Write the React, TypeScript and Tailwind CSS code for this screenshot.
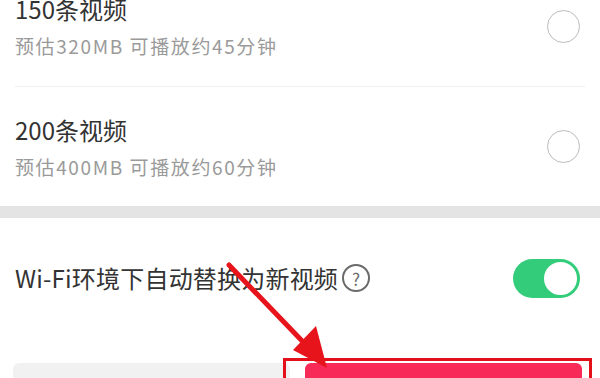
import React from "react";

function OptionRow({ title, sub, h }: { title: string; sub: string; h: string }) {
  return (
    <div className={`flex items-center justify-between pl-[15px] pr-[20px] ${h}`}>
      <div className="flex flex-col">
        <div className="text-[24px] leading-[32px] text-[#333333]">{title}</div>
        <div className="mt-[8px] text-[19px] leading-[26px] tracking-[1.6px] text-[#9a9a9a]">{sub}</div>
      </div>
      <div className="h-[33px] w-[33px] rounded-full border-[1.5px] border-[#bcbcbc]" />
    </div>
  );
}

export default function App() {
  return (
    <div className="relative h-[378px] w-[600px] overflow-hidden bg-white font-['Noto_Sans_CJK_SC','Noto_Sans',sans-serif]">
      <div className="-mt-[34px]">
        <OptionRow title="150条视频" sub="预估320MB 可播放约45分钟" h="h-[120px]" />
        <div className="mx-[15px] h-px bg-[#efefef]" />
        <OptionRow title="200条视频" sub="预估400MB 可播放约60分钟" h="h-[119px]" />
      </div>
      <div className="h-[12px] bg-[#e4e4e4]" />
      <div className="flex h-[120px] items-center justify-between pl-[15px] pr-[20px]">
        <div className="flex items-center">
          <span className="text-[24px] leading-[32px] tracking-[0.2px] text-[#333333]">Wi-Fi环境下自动替换为新视频</span>
          <span className="ml-[4px] flex h-[28px] w-[28px] items-center justify-center rounded-full border-2 border-[#6a6a6a] text-[17px] leading-none text-[#6a6a6a]">
            ?
          </span>
        </div>
        <div className="flex h-[39px] w-[67px] items-center justify-end rounded-full bg-[#33cc7a] pr-[1px]">
          <div className="h-[37px] w-[37px] rounded-full border-2 border-[#33cc7a] bg-white" />
        </div>
      </div>
      <div className="flex gap-[15px] pl-[13px] pr-[18px] pt-[25px]">
        <div className="h-[50px] flex-1 rounded-[6px] bg-[#f1f1f1]" />
        <div className="h-[50px] flex-1 rounded-[6px] bg-[#f72a58]" />
      </div>
      <div className="absolute left-[283px] top-[358px] h-[40px] w-[309px] border-[3px] border-[#e3101a]" />
      <svg className="absolute left-0 top-0" width="600" height="378" viewBox="0 0 600 378">
        <line x1="229" y1="265" x2="306" y2="345" stroke="#e8141b" strokeWidth="5" strokeLinecap="round" />
        <polygon points="327,368 293,350 316,326" fill="#e8141b" />
      </svg>
    </div>
  );
}
